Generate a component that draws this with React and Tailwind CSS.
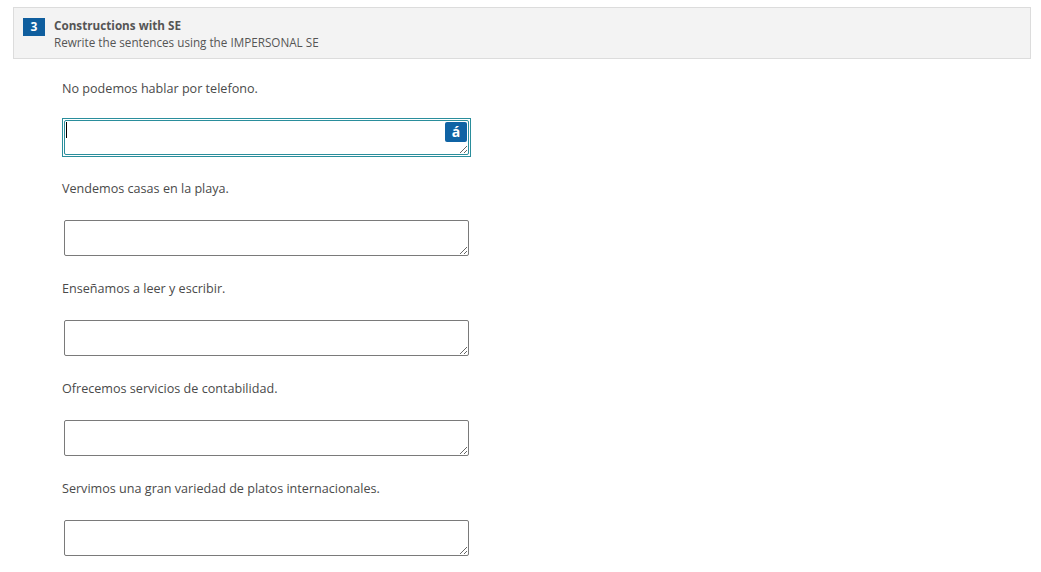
const sentences = [
  'No podemos hablar por telefono.',
  'Vendemos casas en la playa.',
  'Enseñamos a leer y escribir.',
  'Ofrecemos servicios de contabilidad.',
  'Servimos una gran variedad de platos internacionales.',
]

function Answer({ focused }) {
  if (focused) {
    return (
      <div className="relative -mt-[2px] w-[409px] h-[39px] border border-[#2a8e9c] p-[1px] bg-white">
        <textarea
          className="block w-full h-full border border-[#2a8e9c] rounded-[2px] bg-white outline-none appearance-none"
          defaultValue=""
        />
        <div className="absolute left-[3px] top-[3px] w-[1px] h-[16px] bg-black" />
        <button className="absolute right-[3px] top-[3px] w-[22px] h-[20px] rounded-[2px] bg-[#0f63a4] text-white text-[14px] font-bold leading-[20px] flex items-center justify-center">
          á
        </button>
      </div>
    )
  }
  return (
    <textarea
      className="block ml-[2px] w-[405px] h-[36px] border border-[#7a7a7a] rounded-[2px] bg-white outline-none"
      defaultValue=""
    />
  )
}

export default function App() {
  return (
    <div
      className="w-[1041px] h-[572px] bg-white text-[#444] overflow-hidden pt-[7px] pl-[13px] pr-[10px]"
      style={{ fontFamily: '"Open Sans", "Noto Sans", sans-serif' }}
    >
      <div className="h-[52px] bg-[#f3f3f3] border border-[#dcdcdc] flex items-start pt-[10px] pl-[9px]">
        <div className="w-[22px] h-[18px] bg-[#0f5e9e] text-white text-[12px] font-bold flex items-center justify-center">
          3
        </div>
        <div className="ml-[9px] -mt-[1px] text-[11.7px] leading-[17px] text-[#555]">
          <div className="font-bold">Constructions with SE</div>
          <div>Rewrite the sentences using the IMPERSONAL SE</div>
        </div>
      </div>

      <div className="pl-[49px] pt-[20px]">
        {sentences.map((s, i) => (
          <div key={i} className="h-[100px]">
            <p className="text-[12.6px] leading-[20px] text-[#4a4a4a]">{s}</p>
            <div className="mt-[21px]">
              <Answer focused={i === 0} />
            </div>
          </div>
        ))}
      </div>
    </div>
  )
}
